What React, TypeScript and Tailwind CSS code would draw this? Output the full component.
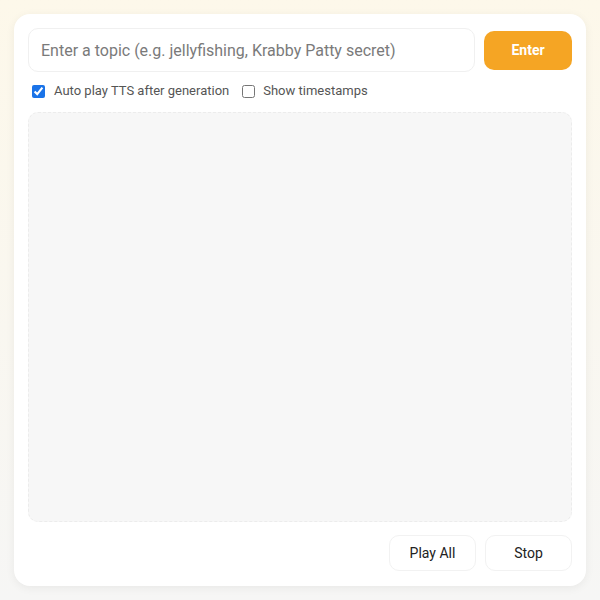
import React from "react";

export default function App() {
  return (
    <div
      className="w-[600px] h-[600px] bg-gradient-to-b from-[#fdf8ea] to-[#f6f6f5] p-[14px]"
      style={{ fontFamily: "Roboto, 'Liberation Sans', sans-serif" }}
    >
      <div className="w-full h-full bg-white rounded-[16px] shadow-[0_2px_10px_rgba(0,0,0,0.06)] px-[14px] pt-[14px] flex flex-col">
        <div className="flex items-center gap-[9px] h-[44px] shrink-0">
          <div className="flex-1 h-[44px] rounded-[10px] border border-[#f0f0f0] flex items-center px-[12px] pt-[2px]">
            <input
              className="w-full outline-none text-[16px] text-[#333] placeholder:text-[#7a7a7a] bg-transparent"
              placeholder="Enter a topic (e.g. jellyfishing, Krabby Patty secret)"
            />
          </div>
          <button className="w-[88px] h-[39px] rounded-[10px] bg-[#f5a524] text-white text-[14px] font-bold">
            Enter
          </button>
        </div>
        <div className="flex items-center h-[24px] mt-[7px] text-[13px] text-[#555] shrink-0">
          <label className="flex items-center ml-[4px]">
            <input type="checkbox" defaultChecked className="w-[13px] h-[13px] m-0 accent-[#1a73e8]" />
            <span className="ml-[9px]">Auto play TTS after generation</span>
          </label>
          <label className="flex items-center ml-[13px]">
            <input type="checkbox" className="w-[13px] h-[13px] m-0" />
            <span className="ml-[8px]">Show timestamps</span>
          </label>
        </div>
        <div className="h-[410px] shrink-0 mt-[9px] rounded-[10px] border border-dashed border-[#ececec] bg-[#f7f7f7]"></div>
        <div className="flex justify-end gap-[9px] mt-[13px] shrink-0">
          <button className="w-[87px] h-[36px] rounded-[10px] border border-[#f2f2f2] bg-white text-[14px] text-[#222]">
            Play All
          </button>
          <button className="w-[87px] h-[36px] rounded-[10px] border border-[#f2f2f2] bg-white text-[14px] text-[#222]">
            Stop
          </button>
        </div>
      </div>
    </div>
  );
}
